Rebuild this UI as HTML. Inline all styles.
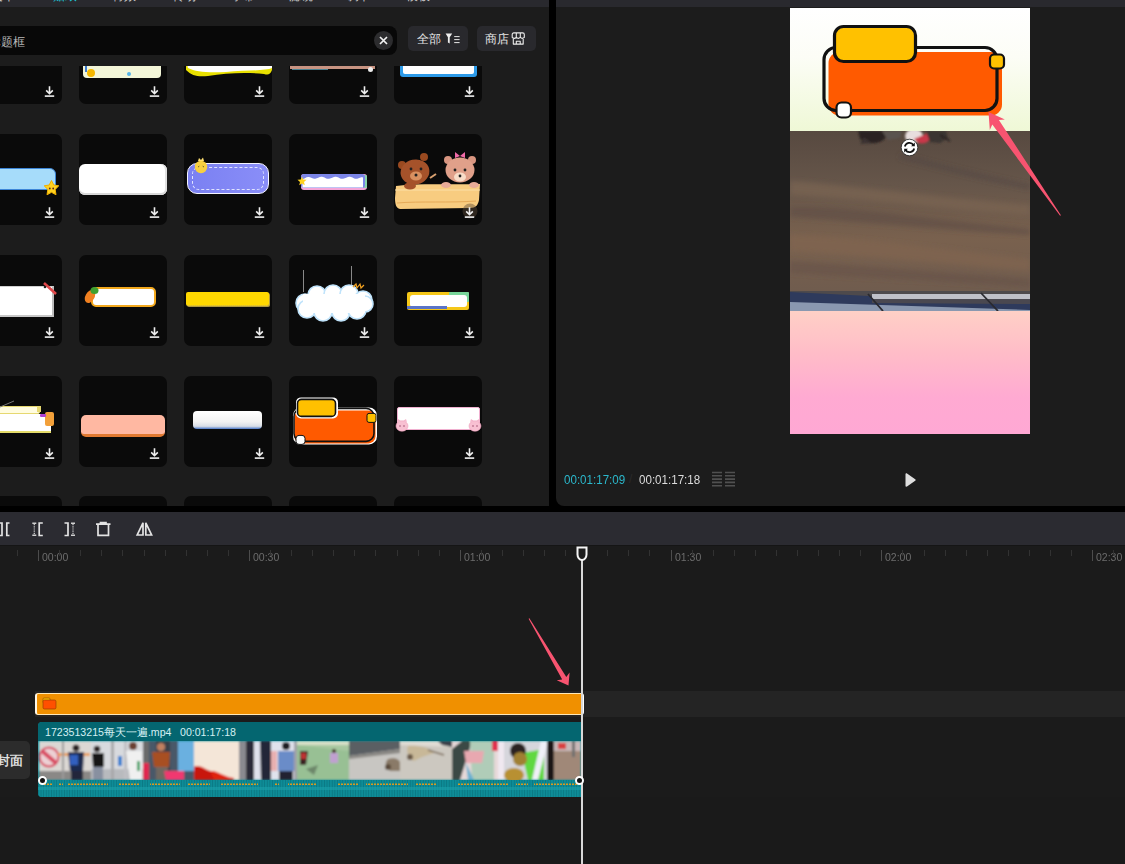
<!DOCTYPE html><html><head><meta charset="utf-8"><style>
*{margin:0;padding:0;box-sizing:border-box}
html,body{width:1125px;height:864px;overflow:hidden;background:#1b1b1b;font-family:"Liberation Sans",sans-serif}
.a{position:absolute}
.tab{top:-12.5px;font-size:12px;color:#d8d8d8;white-space:nowrap}
.card{position:absolute;width:88px;height:91px;background:#0a0a0a;border-radius:7px}
.rt{position:absolute;font-size:10.9px;color:#6c6c6c;top:550.5px;white-space:nowrap;transform:scaleX(0.965);transform-origin:0 0}
.tk{position:absolute;width:1px;background:#505050}
</style></head><body>
<div class="a" style="left:0;top:0;width:549px;height:506px;background:#1c1c1c"></div>
<div class="a" style="left:0;top:0;width:549px;height:7px;background:#29292e"></div>
<div class="a" style="left:0;top:0;width:549px;height:7px;overflow:hidden">
<div class="a tab" style="left:-9px;color:#d0d0d0">文本</div>
<div class="a tab" style="left:53px;color:#1fc0d2">贴纸</div>
<div class="a tab" style="left:112px;color:#d0d0d0">特效</div>
<div class="a tab" style="left:172px;color:#d0d0d0">转场</div>
<div class="a tab" style="left:231px;color:#d0d0d0">字幕</div>
<div class="a tab" style="left:289px;color:#d0d0d0">滤镜</div>
<div class="a tab" style="left:347px;color:#d0d0d0">调节</div>
<div class="a tab" style="left:406px;color:#d0d0d0">模板</div>
</div>
<div class="a" style="left:-20px;top:26px;width:417px;height:29px;background:#080808;border-radius:8px"></div>
<div class="a" style="left:-11px;top:34px;font-size:12px;color:#b8b8b8;white-space:nowrap">标题框</div>
<div class="a" style="left:374px;top:31px;width:19px;height:19px;border-radius:50%;background:#2c2c2e"></div>
<svg class="a" style="left:378px;top:35px" width="11" height="11" viewBox="0 0 11 11"><path d="M2 2L9 9M9 2L2 9" stroke="#f2f2f2" stroke-width="1.7"/></svg>
<div class="a" style="left:408px;top:26px;width:60px;height:25px;background:#29292d;border-radius:5px"></div>
<div class="a" style="left:417px;top:31px;font-size:12px;color:#e6e6e6;white-space:nowrap">全部</div>
<svg class="a" style="left:445px;top:33px" width="16" height="11" viewBox="0 0 16 11"><path d="M0.6 0.5H7.2L4.7 4.2V10.6L2.9 9.4V4.2Z" fill="#eee"/><path d="M9.2 3.6H14.6M9.2 6.6H14.6M9.2 9.6H14.6" stroke="#e8e8e8" stroke-width="1"/></svg>
<div class="a" style="left:477px;top:26px;width:59px;height:25px;background:#29292d;border-radius:5px"></div>
<div class="a" style="left:485px;top:31px;font-size:12px;color:#e6e6e6;white-space:nowrap">商店</div>
<svg class="a" style="left:511px;top:32px" width="15" height="13" viewBox="0 0 15 13"><g stroke="#ececec" stroke-width="1.1" fill="none" stroke-linejoin="round"><path d="M1.2 5.4V2.6Q1.2 0.9 2.9 0.9H11.6Q13.3 0.9 13.3 2.6V5.4Q11.3 7.4 9.3 5.4Q7.3 7.4 5.3 5.4Q3.2 7.4 1.2 5.4Z"/><path d="M5.3 0.9V5.4M9.3 0.9V5.4"/><path d="M2.3 6.9V12.1H12.2V6.9M5.3 12.1V9.3H9.2V12.1"/></g></svg>
<div class="a" style="left:0;top:66px;width:549px;height:440px;overflow:hidden">
<div class="card" style="left:-26px;top:-52.8px">
<svg class="a" style="left:69.5px;top:72.6px" width="11" height="11" viewBox="0 0 11 11"><path d="M5.5 0.3V7.6M2.2 4.4L5.5 7.7L8.8 4.4" stroke="#f0f0f0" stroke-width="1.6" fill="none"/><path d="M0.8 10.1H10.2" stroke="#f0f0f0" stroke-width="1.6"/></svg>
</div>
<div class="card" style="left:79px;top:-52.8px">
<div class="a" style="left:4px;top:41.8px;width:78px;height:23px;background:#f3f6d8;border-radius:0 0 4px 4px"></div>
<div class="a" style="left:6px;top:46.8px;width:2px;height:12px;background:#3f7bd0"></div>
<div class="a" style="left:8px;top:55.8px;width:8px;height:8px;background:#f5b800;border-radius:50%"></div>
<div class="a" style="left:48px;top:58.8px;width:4px;height:4px;background:#56b4e8;border-radius:50%"></div>
<svg class="a" style="left:69.5px;top:72.6px" width="11" height="11" viewBox="0 0 11 11"><path d="M5.5 0.3V7.6M2.2 4.4L5.5 7.7L8.8 4.4" stroke="#f0f0f0" stroke-width="1.6" fill="none"/><path d="M0.8 10.1H10.2" stroke="#f0f0f0" stroke-width="1.6"/></svg>
</div>
<div class="card" style="left:184px;top:-52.8px">
<svg class="a" style="left:2px;top:46.8px" width="86" height="18" viewBox="0 0 86 18"><path d="M0 0H86V10C84 15 82 15 78 14C60 12 40 13 22 16C12 17 6 16 0 10Z" fill="#e8e000"/><path d="M0 0H86V8C80 11 60 10 40 12C22 13 10 12 2 8Z" fill="#fff"/></svg>
<svg class="a" style="left:69.5px;top:72.6px" width="11" height="11" viewBox="0 0 11 11"><path d="M5.5 0.3V7.6M2.2 4.4L5.5 7.7L8.8 4.4" stroke="#f0f0f0" stroke-width="1.6" fill="none"/><path d="M0.8 10.1H10.2" stroke="#f0f0f0" stroke-width="1.6"/></svg>
</div>
<div class="card" style="left:289px;top:-52.8px">
<div class="a" style="left:1px;top:52.8px;width:85px;height:3px;background:#c89482"></div>
<div class="a" style="left:3px;top:55.8px;width:36px;height:1px;background:#4a8090"></div>
<div class="a" style="left:79px;top:53.8px;width:5px;height:5px;background:#eee;border-radius:50%"></div>
<svg class="a" style="left:69.5px;top:72.6px" width="11" height="11" viewBox="0 0 11 11"><path d="M5.5 0.3V7.6M2.2 4.4L5.5 7.7L8.8 4.4" stroke="#f0f0f0" stroke-width="1.6" fill="none"/><path d="M0.8 10.1H10.2" stroke="#f0f0f0" stroke-width="1.6"/></svg>
</div>
<div class="card" style="left:394px;top:-52.8px">
<div class="a" style="left:6px;top:41.8px;width:77px;height:22px;background:#2c9ae8;border-radius:0 0 3px 3px"></div>
<div class="a" style="left:9px;top:41.8px;width:71px;height:19px;background:#fff;border-radius:0 0 2px 2px"></div>
<svg class="a" style="left:69.5px;top:72.6px" width="11" height="11" viewBox="0 0 11 11"><path d="M5.5 0.3V7.6M2.2 4.4L5.5 7.7L8.8 4.4" stroke="#f0f0f0" stroke-width="1.6" fill="none"/><path d="M0.8 10.1H10.2" stroke="#f0f0f0" stroke-width="1.6"/></svg>
</div>
<div class="card" style="left:-26px;top:68px">
<div class="a" style="left:6px;top:34px;width:76px;height:22px;background:#a6dcfa;border:1.5px solid #3d86d8;border-radius:6px"></div>
<svg class="a" style="left:69px;top:46px" width="17" height="16" viewBox="0 0 17 16"><path d="M8.5 0.5L10.8 5L15.8 5.8L12.2 9.4L13 14.8L8.5 12.3L4 14.8L4.8 9.4L1.2 5.8L6.2 5Z" fill="#ffd21f" stroke="#f0b000" stroke-width="1" stroke-linejoin="round"/><circle cx="6.8" cy="8.5" r="0.9" fill="#522"/><circle cx="10.2" cy="8.5" r="0.9" fill="#522"/></svg>
<svg class="a" style="left:69.5px;top:72.6px" width="11" height="11" viewBox="0 0 11 11"><path d="M5.5 0.3V7.6M2.2 4.4L5.5 7.7L8.8 4.4" stroke="#f0f0f0" stroke-width="1.6" fill="none"/><path d="M0.8 10.1H10.2" stroke="#f0f0f0" stroke-width="1.6"/></svg>
</div>
<div class="card" style="left:79px;top:68px">
<div class="a" style="left:0px;top:30px;width:88px;height:31px;background:#fff;border-radius:6px;box-shadow:inset 0 -2px 0 #d8d8d8,inset -2px 0 0 #e0e0e0"></div>
<svg class="a" style="left:69.5px;top:72.6px" width="11" height="11" viewBox="0 0 11 11"><path d="M5.5 0.3V7.6M2.2 4.4L5.5 7.7L8.8 4.4" stroke="#f0f0f0" stroke-width="1.6" fill="none"/><path d="M0.8 10.1H10.2" stroke="#f0f0f0" stroke-width="1.6"/></svg>
</div>
<div class="card" style="left:184px;top:68px">
<div class="a" style="left:3px;top:29px;width:82px;height:31px;background:linear-gradient(90deg,#7a80f2,#8a8ef8);border:1.5px solid #f4f4ff;border-radius:10px"></div>
<div class="a" style="left:8px;top:33px;width:72px;height:23px;border:1px dashed #e0e4ff;border-radius:7px"></div>
<svg class="a" style="left:9px;top:23px" width="16" height="17" viewBox="0 0 16 17"><path d="M5 4L6 1L8 3L10 0.5L11 4" fill="#ffe070"/><circle cx="8" cy="10" r="6.2" fill="#f8d040"/><path d="M5 10L6.3 9.2M11 10L9.7 9.2" stroke="#553" stroke-width="0.9"/></svg>
<svg class="a" style="left:69.5px;top:72.6px" width="11" height="11" viewBox="0 0 11 11"><path d="M5.5 0.3V7.6M2.2 4.4L5.5 7.7L8.8 4.4" stroke="#f0f0f0" stroke-width="1.6" fill="none"/><path d="M0.8 10.1H10.2" stroke="#f0f0f0" stroke-width="1.6"/></svg>
</div>
<div class="card" style="left:289px;top:68px">
<svg class="a" style="left:11px;top:39px" width="68" height="18" viewBox="0 0 68 18">
<rect x="1" y="1" width="66" height="16" rx="3" fill="#f4a6d8"/>
<rect x="63" y="2" width="4" height="13" rx="1.5" fill="#88d4a8"/>
<rect x="1" y="1" width="64" height="14" rx="3" fill="#7c86e8"/>
<path d="M2.5 14.5V6C5 6 6 3.5 9 4C12 4.5 13 6.5 16 5.5C19 4.5 20 3 23 4C26 5 27 6.5 30 5.5C33 4.5 34 3 37 4C40 5 41 6.5 44 5.5C47 4.5 48 3 51 4C54 5 55 6.5 58 5.5C60 5 61 4 63 4.5V14.5Z" fill="#fff"/>
</svg>
<svg class="a" style="left:8px;top:42px" width="10" height="10" viewBox="0 0 10 10"><path d="M5 0.5L6.2 3.6L9.5 3.8L7 6L7.8 9.3L5 7.5L2.2 9.3L3 6L0.5 3.8L3.8 3.6Z" fill="#ffd21f"/></svg>
<svg class="a" style="left:69.5px;top:72.6px" width="11" height="11" viewBox="0 0 11 11"><path d="M5.5 0.3V7.6M2.2 4.4L5.5 7.7L8.8 4.4" stroke="#f0f0f0" stroke-width="1.6" fill="none"/><path d="M0.8 10.1H10.2" stroke="#f0f0f0" stroke-width="1.6"/></svg>
</div>
<div class="card" style="left:394px;top:68px">
<svg class="a" style="left:0;top:0" width="88" height="91" viewBox="0 0 88 91">
<g transform="translate(-394,-134)">
<path d="M396 186C420 183 450 185 480 184L479 200C478 205 476 208 470 208L400 209C396 208 395 204 395 198Z" fill="#f8cc80"/>
<path d="M395 190H480" stroke="#fbe0a8" stroke-width="1"/>
<path d="M397 203C420 201 450 203 476 201" stroke="#e6aa58" stroke-width="1" fill="none"/>
<circle cx="402" cy="165" r="4" fill="#9a4a20"/><circle cx="424" cy="157" r="4" fill="#9a4a20"/>
<ellipse cx="415" cy="172" rx="14.5" ry="12.5" fill="#a5522a" transform="rotate(-12 415 172)"/>
<ellipse cx="416" cy="176" rx="6" ry="4.5" fill="#d89060"/>
<circle cx="411" cy="169" r="1.4" fill="#222"/><circle cx="421" cy="169" r="1.4" fill="#222"/>
<circle cx="416" cy="175" r="1.5" fill="#222"/>
<path d="M430 178L436 174" stroke="#d8a070" stroke-width="2"/>
<ellipse cx="410" cy="186" rx="6" ry="3.5" fill="#a5522a"/>
<circle cx="448" cy="160" r="4" fill="#d89580"/><circle cx="472" cy="160" r="4" fill="#d89580"/>
<ellipse cx="460" cy="170" rx="14.5" ry="12.5" fill="#e0a08a"/>
<ellipse cx="460" cy="177" rx="6" ry="4.5" fill="#f8dcc8"/>
<circle cx="455" cy="170" r="1.4" fill="#222"/><circle cx="465" cy="170" r="1.4" fill="#222"/>
<circle cx="460" cy="176" r="1.4" fill="#222"/>
<path d="M455 152L460 156L465 152L465 158L460 156L455 158Z" fill="#f06aa8"/>
<ellipse cx="446" cy="185" rx="5" ry="3" fill="#e8ab98"/><ellipse cx="474" cy="185" rx="5" ry="3" fill="#e8ab98"/>
<circle cx="470" cy="211" r="7.5" fill="#5a4a38" opacity="0.45"/>
</g></svg>
<svg class="a" style="left:69.5px;top:72.6px" width="11" height="11" viewBox="0 0 11 11"><path d="M5.5 0.3V7.6M2.2 4.4L5.5 7.7L8.8 4.4" stroke="#f0f0f0" stroke-width="1.6" fill="none"/><path d="M0.8 10.1H10.2" stroke="#f0f0f0" stroke-width="1.6"/></svg>
</div>
<div class="card" style="left:-26px;top:188.8px">
<div class="a" style="left:6px;top:31.19999999999999px;width:74px;height:31px;background:#fff;border:1.5px solid #d0d0d0;border-right:2px solid #bdbdbd;border-bottom:2px solid #c8c8c8"></div>
<svg class="a" style="left:66px;top:27.19999999999999px" width="18" height="16" viewBox="0 0 18 16"><path d="M4 1L16 12" stroke="#e0484a" stroke-width="2.6"/><circle cx="5" cy="5" r="1.3" fill="#222"/></svg>
<svg class="a" style="left:69.5px;top:72.6px" width="11" height="11" viewBox="0 0 11 11"><path d="M5.5 0.3V7.6M2.2 4.4L5.5 7.7L8.8 4.4" stroke="#f0f0f0" stroke-width="1.6" fill="none"/><path d="M0.8 10.1H10.2" stroke="#f0f0f0" stroke-width="1.6"/></svg>
</div>
<div class="card" style="left:79px;top:188.8px">
<div class="a" style="left:12px;top:32.19999999999999px;width:65px;height:20px;background:#fff;border:2px solid #f2a81d;border-radius:5px"></div>
<svg class="a" style="left:4px;top:30.19999999999999px" width="16" height="19" viewBox="0 0 16 19"><ellipse cx="7" cy="11.5" rx="4.5" ry="7" transform="rotate(30 7 11.5)" fill="#f08020"/><ellipse cx="11.5" cy="5.5" rx="4" ry="3.6" fill="#40a030"/></svg>
<svg class="a" style="left:69.5px;top:72.6px" width="11" height="11" viewBox="0 0 11 11"><path d="M5.5 0.3V7.6M2.2 4.4L5.5 7.7L8.8 4.4" stroke="#f0f0f0" stroke-width="1.6" fill="none"/><path d="M0.8 10.1H10.2" stroke="#f0f0f0" stroke-width="1.6"/></svg>
</div>
<div class="card" style="left:184px;top:188.8px">
<div class="a" style="left:2px;top:37.19999999999999px;width:83px;height:14px;background:#ffd800;border-radius:2px;border-bottom:1.5px dotted #c8b050;box-shadow:1px 1px 0 #b09a40"></div>
<svg class="a" style="left:69.5px;top:72.6px" width="11" height="11" viewBox="0 0 11 11"><path d="M5.5 0.3V7.6M2.2 4.4L5.5 7.7L8.8 4.4" stroke="#f0f0f0" stroke-width="1.6" fill="none"/><path d="M0.8 10.1H10.2" stroke="#f0f0f0" stroke-width="1.6"/></svg>
</div>
<div class="card" style="left:289px;top:188.8px">
<div class="a" style="left:14px;top:15.199999999999989px;width:1px;height:22px;background:#888"></div>
<div class="a" style="left:62px;top:11.199999999999989px;width:1px;height:24px;background:#888"></div>
<svg class="a" style="left:4px;top:26.19999999999999px" width="82" height="42" viewBox="0 0 82 42">
<g fill="#fff" stroke="#bfe3fb" stroke-width="1.6">
<circle cx="12" cy="22" r="9"/><circle cx="24" cy="14" r="9"/><circle cx="40" cy="13" r="9"/><circle cx="56" cy="13" r="9"/><circle cx="70" cy="19" r="9"/>
<circle cx="14" cy="28" r="9"/><circle cx="30" cy="31" r="9"/><circle cx="48" cy="31" r="9"/><circle cx="64" cy="29" r="9"/><circle cx="72" cy="23" r="8"/>
</g>
<rect x="10" y="13" width="62" height="19" fill="#fff"/>
<path d="M60 6L63 3L64 7L67 3L68 7L71 4" stroke="#f0a020" stroke-width="1.2" fill="none"/>
</svg>
<svg class="a" style="left:69.5px;top:72.6px" width="11" height="11" viewBox="0 0 11 11"><path d="M5.5 0.3V7.6M2.2 4.4L5.5 7.7L8.8 4.4" stroke="#f0f0f0" stroke-width="1.6" fill="none"/><path d="M0.8 10.1H10.2" stroke="#f0f0f0" stroke-width="1.6"/></svg>
</div>
<div class="card" style="left:394px;top:188.8px">
<div class="a" style="left:13px;top:37.19999999999999px;width:62px;height:18px;background:#f5c718;border-radius:2px"></div>
<div class="a" style="left:55px;top:37.19999999999999px;width:20px;height:10px;background:#78d69a;border-radius:1px"></div>
<div class="a" style="left:16px;top:40.19999999999999px;width:57px;height:12px;background:#fff;border-radius:3px"></div>
<div class="a" style="left:13px;top:51.19999999999999px;width:40px;height:3px;background:#5a74c8"></div>
<svg class="a" style="left:69.5px;top:72.6px" width="11" height="11" viewBox="0 0 11 11"><path d="M5.5 0.3V7.6M2.2 4.4L5.5 7.7L8.8 4.4" stroke="#f0f0f0" stroke-width="1.6" fill="none"/><path d="M0.8 10.1H10.2" stroke="#f0f0f0" stroke-width="1.6"/></svg>
</div>
<div class="card" style="left:-26px;top:309.6px">
<div class="a" style="left:6px;top:38.39999999999998px;width:71px;height:19px;background:#fff;border-bottom:2.5px solid #e4dc6a"></div>
<div class="a" style="left:6px;top:30.399999999999977px;width:60px;height:8px;background:#fffce0;border:1px solid #e6d870;border-radius:2px"></div>
<div class="a" style="left:71px;top:36.39999999999998px;width:9px;height:14px;background:#f2a03a;border-radius:2px"></div>
<div class="a" style="left:63px;top:30.399999999999977px;width:4px;height:6px;background:#e6d870"></div>
<svg class="a" style="left:26px;top:23.399999999999977px" width="16" height="10" viewBox="0 0 16 10"><path d="M0 8L14 2" stroke="#777" stroke-width="1"/></svg>
<div class="a" style="left:66px;top:38.39999999999998px;width:6px;height:3px;background:#b040d0;border-radius:1px"></div>
<svg class="a" style="left:69.5px;top:72.6px" width="11" height="11" viewBox="0 0 11 11"><path d="M5.5 0.3V7.6M2.2 4.4L5.5 7.7L8.8 4.4" stroke="#f0f0f0" stroke-width="1.6" fill="none"/><path d="M0.8 10.1H10.2" stroke="#f0f0f0" stroke-width="1.6"/></svg>
</div>
<div class="card" style="left:79px;top:309.6px">
<div class="a" style="left:2px;top:39.39999999999998px;width:84px;height:22px;background:#ffb8a2;border-radius:5px;border-bottom:3px solid #e07a32"></div>
<svg class="a" style="left:69.5px;top:72.6px" width="11" height="11" viewBox="0 0 11 11"><path d="M5.5 0.3V7.6M2.2 4.4L5.5 7.7L8.8 4.4" stroke="#f0f0f0" stroke-width="1.6" fill="none"/><path d="M0.8 10.1H10.2" stroke="#f0f0f0" stroke-width="1.6"/></svg>
</div>
<div class="card" style="left:184px;top:309.6px">
<div class="a" style="left:9px;top:35.39999999999998px;width:69px;height:18px;background:linear-gradient(180deg,#ffffff 0%,#f2f2f2 60%,#d8dde6 85%,#4a78c8 100%);border-radius:4px"></div>
<svg class="a" style="left:69.5px;top:72.6px" width="11" height="11" viewBox="0 0 11 11"><path d="M5.5 0.3V7.6M2.2 4.4L5.5 7.7L8.8 4.4" stroke="#f0f0f0" stroke-width="1.6" fill="none"/><path d="M0.8 10.1H10.2" stroke="#f0f0f0" stroke-width="1.6"/></svg>
</div>
<div class="card" style="left:289px;top:309.6px">
<svg class="a" style="left:0;top:0" width="88" height="91" viewBox="0 0 88 91">
<g transform="translate(-289,-375.6)">
<rect x="293" y="407" width="84" height="37" rx="8" fill="#fff"/>
<rect x="294.5" y="410" width="81" height="33" rx="7" fill="#ff5a00"/>
<rect x="294" y="408" width="80" height="33" rx="8" fill="none" stroke="#111" stroke-width="1.6"/>
<rect x="296" y="397" width="42" height="21" rx="5" fill="#fff"/>
<rect x="297.5" y="399" width="38" height="17" rx="4" fill="#ffc000" stroke="#111" stroke-width="1.6"/>
<rect x="367" y="413" width="9" height="9" rx="2" fill="#ffc000" stroke="#111" stroke-width="1"/>
<rect x="296" y="435" width="9" height="9" rx="3" fill="#fff" stroke="#111" stroke-width="1"/>
</g></svg>
</div>
<div class="card" style="left:394px;top:309.6px">
<div class="a" style="left:3px;top:31.399999999999977px;width:83px;height:23px;background:#fff;border:1.5px solid #f0b0d0;border-radius:2px"></div>
<svg class="a" style="left:1px;top:42.39999999999998px" width="14" height="14" viewBox="0 0 14 14"><path d="M2 4L3 1L6 3M8 3L11 1L12 4" fill="#f5b8cc"/><ellipse cx="7" cy="8" rx="6" ry="5.2" fill="#f8c0d2" stroke="#eea0bc" stroke-width="0.6"/><circle cx="5" cy="8" r="0.8" fill="#a05070"/><circle cx="9" cy="8" r="0.8" fill="#a05070"/></svg>
<svg class="a" style="left:74px;top:42.39999999999998px" width="14" height="14" viewBox="0 0 14 14"><path d="M2 4L3 1L6 3M8 3L11 1L12 4" fill="#f5b8cc"/><ellipse cx="7" cy="8" rx="6" ry="5.2" fill="#f8c0d2" stroke="#eea0bc" stroke-width="0.6"/><circle cx="5" cy="8" r="0.8" fill="#a05070"/><circle cx="9" cy="8" r="0.8" fill="#a05070"/></svg>
<svg class="a" style="left:69.5px;top:72.6px" width="11" height="11" viewBox="0 0 11 11"><path d="M5.5 0.3V7.6M2.2 4.4L5.5 7.7L8.8 4.4" stroke="#f0f0f0" stroke-width="1.6" fill="none"/><path d="M0.8 10.1H10.2" stroke="#f0f0f0" stroke-width="1.6"/></svg>
</div>
<div class="card" style="left:-26px;top:430.4px">
<svg class="a" style="left:69.5px;top:72.6px" width="11" height="11" viewBox="0 0 11 11"><path d="M5.5 0.3V7.6M2.2 4.4L5.5 7.7L8.8 4.4" stroke="#f0f0f0" stroke-width="1.6" fill="none"/><path d="M0.8 10.1H10.2" stroke="#f0f0f0" stroke-width="1.6"/></svg>
</div>
<div class="card" style="left:79px;top:430.4px">
<svg class="a" style="left:69.5px;top:72.6px" width="11" height="11" viewBox="0 0 11 11"><path d="M5.5 0.3V7.6M2.2 4.4L5.5 7.7L8.8 4.4" stroke="#f0f0f0" stroke-width="1.6" fill="none"/><path d="M0.8 10.1H10.2" stroke="#f0f0f0" stroke-width="1.6"/></svg>
</div>
<div class="card" style="left:184px;top:430.4px">
<svg class="a" style="left:69.5px;top:72.6px" width="11" height="11" viewBox="0 0 11 11"><path d="M5.5 0.3V7.6M2.2 4.4L5.5 7.7L8.8 4.4" stroke="#f0f0f0" stroke-width="1.6" fill="none"/><path d="M0.8 10.1H10.2" stroke="#f0f0f0" stroke-width="1.6"/></svg>
</div>
<div class="card" style="left:289px;top:430.4px">
<svg class="a" style="left:69.5px;top:72.6px" width="11" height="11" viewBox="0 0 11 11"><path d="M5.5 0.3V7.6M2.2 4.4L5.5 7.7L8.8 4.4" stroke="#f0f0f0" stroke-width="1.6" fill="none"/><path d="M0.8 10.1H10.2" stroke="#f0f0f0" stroke-width="1.6"/></svg>
</div>
<div class="card" style="left:394px;top:430.4px">
<svg class="a" style="left:69.5px;top:72.6px" width="11" height="11" viewBox="0 0 11 11"><path d="M5.5 0.3V7.6M2.2 4.4L5.5 7.7L8.8 4.4" stroke="#f0f0f0" stroke-width="1.6" fill="none"/><path d="M0.8 10.1H10.2" stroke="#f0f0f0" stroke-width="1.6"/></svg>
</div>
</div>
<div class="a" style="left:549px;top:0;width:7px;height:512px;background:#000"></div>
<div class="a" style="left:549px;top:480px;width:30px;height:32px;background:#000"></div>
<div class="a" style="left:556px;top:0;width:569px;height:506px;background:#1c1c1c;border-bottom-left-radius:8px"></div>
<div class="a" style="left:556px;top:0;width:569px;height:7px;background:#29292e"></div>
<div class="a" style="left:0;top:506px;width:1125px;height:6px;background:#000"></div>

<div class="a" style="left:790px;top:8px;width:240px;height:123px;background:linear-gradient(180deg,#ffffff 0%,#fcfdf6 40%,#eff8d6 100%)"></div>
<div class="a" style="left:790px;top:131px;width:240px;height:180px;background:linear-gradient(175deg,#5e5048 0%,#6e5a4c 25%,#7a6050 50%,#6e5a4c 75%,#5a5250 100%)"></div>
<div class="a" style="left:790px;top:311px;width:240px;height:123px;background:linear-gradient(180deg,#ffd0c6 0%,#ffbcc8 35%,#ffaad2 70%,#ffa8d4 100%)"></div>

<svg class="a" style="left:790px;top:131px" width="240" height="180" viewBox="0 0 240 180">
<defs><filter id="vb" x="-10%" y="-10%" width="120%" height="120%"><feGaussianBlur stdDeviation="2.5"/></filter>
<filter id="vb2" x="-10%" y="-10%" width="120%" height="120%"><feGaussianBlur stdDeviation="0.8"/></filter>
<linearGradient id="vg" x1="0" y1="0" x2="0" y2="1"><stop offset="0" stop-color="#574940"/><stop offset="0.3" stop-color="#66564a"/><stop offset="0.6" stop-color="#79614e"/><stop offset="1" stop-color="#6c5a4e"/></linearGradient></defs>
<rect x="0" y="0" width="240" height="180" fill="url(#vg)"/>
<g filter="url(#vb)">
<path d="M0 50C60 54 140 66 240 74V84C150 78 80 68 0 64Z" fill="#7a6452" opacity="0.7"/>
<path d="M0 76C50 74 120 86 240 98V104C140 98 60 90 0 86Z" fill="#5e4c42" opacity="0.6"/>
<path d="M0 104C60 106 140 116 240 128V140C150 132 60 124 0 120Z" fill="#806450" opacity="0.7"/>
<path d="M0 130C60 134 140 140 240 148V156C150 150 60 146 0 142Z" fill="#625046" opacity="0.5"/>
<path d="M110 25C150 36 200 48 240 56" stroke="#4e4440" stroke-width="5" fill="none" opacity="0.5"/>
</g>
<g filter="url(#vb2)">
<path d="M68 0H92L96 6C92 12 84 13 76 12L70 8Z" fill="#2a2422"/>
<path d="M74 6L82 12L70 13Z" fill="#3a3230"/>
<path d="M92 0H112L110 7L98 9Z" fill="#5a5250"/>
<ellipse cx="124" cy="5" rx="9" ry="7" fill="#e8dede"/>
<path d="M124 8C128 14 136 14 140 8L138 2Z" fill="#c83848"/>
<path d="M136 0H156L158 7L150 12L140 11Z" fill="#3a3430"/>
<path d="M150 4L160 10" stroke="#2a2422" stroke-width="2"/>
</g>
<path d="M0 160L240 160V180H0Z" fill="#4e4a4c"/>
<path d="M0 170L240 176V180H0Z" fill="#8a98b0"/>
<path d="M0 161L240 173V179L0 171Z" fill="#2e3a5c"/>
<path d="M82 163L240 163V168L82 168Z" fill="#bfc0c8"/>
<path d="M82 168L240 168V173L82 172Z" fill="#4a4850"/>
<path d="M78 163L93 180M191 162L208 180" stroke="#2a2a30" stroke-width="1.8"/>
</svg>
<svg class="a" style="left:790px;top:8px" width="240" height="123" viewBox="0 0 240 123">
<g transform="translate(-790,-8)">
<rect x="828.5" y="52" width="173.5" height="63.5" rx="11" fill="#ff5a00"/>
<rect x="824" y="47.5" width="173" height="63" rx="12" fill="none" stroke="#111" stroke-width="3.2"/>
<rect x="834.5" y="26.5" width="81" height="35" rx="9" fill="#ffc100" stroke="#111" stroke-width="3.2"/>
<rect x="990" y="54.5" width="14" height="14" rx="4" fill="#ffc100" stroke="#111" stroke-width="2.2"/>
<rect x="836.5" y="102.5" width="14.5" height="15" rx="5" fill="#fff" stroke="#111" stroke-width="2.2"/>
</g></svg>
<svg class="a" style="left:900px;top:138px" width="19" height="19" viewBox="0 0 19 19">
<circle cx="9.5" cy="9.5" r="8.3" fill="#fff" stroke="#222" stroke-width="0.8"/>
<path d="M4.8 8.5A4.8 4.8 0 0 1 13.5 7M14.2 10.5A4.8 4.8 0 0 1 5.5 12" stroke="#111" stroke-width="1.7" fill="none"/>
<path d="M14.8 4.5V8.2H11.1Z M4.2 14.5V10.8H7.9Z" fill="#111"/>
</svg>
<svg class="a" style="left:0;top:0" width="1125" height="864" viewBox="0 0 1125 864"><path d="M988.5 112.0 L989.8 130.0 L992.3 124.5 L1060.1 215.8 L1060.9 215.2 L998.9 119.9 L1004.9 119.5Z" fill="#f85470"/><path d="M568.5 685.5 L569.6 672.6 L566.3 677.0 L529.4 618.2 L528.6 618.8 L562.2 679.5 L556.7 680.3Z" fill="#f85470"/></svg>
<div class="a" style="left:564px;top:472px;font-size:12.8px;color:#2bb8cc;white-space:nowrap;transform:scaleX(0.905);transform-origin:0 0">00:01:17:09</div>
<div class="a" style="left:629px;top:472px;font-size:12px;color:#2a2a2a">/</div>
<div class="a" style="left:638.6px;top:472px;font-size:12.8px;color:#dcdcdc;white-space:nowrap;transform:scaleX(0.905);transform-origin:0 0">00:01:17:18</div>
<svg class="a" style="left:712px;top:471px" width="24" height="17" viewBox="0 0 24 17">
<g stroke="#505050" stroke-width="1.6">
<path d="M0 1.5H10M0 4.8H10M0 8.1H10M0 11.4H10M0 14.7H10"/>
<path d="M13 1.5H23M13 4.8H23M13 8.1H23M13 11.4H23M13 14.7H23"/>
</g></svg>
<svg class="a" style="left:903px;top:472px" width="14" height="16" viewBox="0 0 14 16"><path d="M2.5 2.2C2.5 1.4 3.3 1 4 1.4L12.2 7.2C12.8 7.6 12.8 8.4 12.2 8.8L4 14.6C3.3 15 2.5 14.6 2.5 13.8Z" fill="#dedede"/></svg>
<div class="a" style="left:0;top:512px;width:1125px;height:34px;background:#2b2b31"></div>
<div class="a" style="left:0;top:545px;width:1125px;height:1px;background:#151515"></div>
<svg class="a" style="left:0;top:520px" width="160" height="18" viewBox="0 0 160 18">
<g stroke="#e4e4e4" stroke-width="1.7" fill="none">
<path d="M-1 3H2V15.5H-1 M9.5 3H6.8V15.5H9.5"/>
<path d="M42.8 3H39.2V15.5H42.8"/>
<path d="M64.5 3H68V15.5H64.5"/>
<path d="M96 4.2H110.5 M100.5 4.2V2.6H106V4.2 M98 4.2V15.3H108.5V4.2"/>
<path d="M143 2.8L137.2 15H143Z M145.8 2.8L151.6 15H145.8Z"/>
</g>
<g stroke="#d0d0d0" stroke-width="1.6">
<path d="M32.3 3.3H36.3 M32.3 15.2H36.3 M71 3.3H75 M71 15.2H75"/>
</g>
<g stroke="#c8c8c8" stroke-width="1.3" stroke-dasharray="1.2 1">
<path d="M34.3 4V14.5 M73 4V14.5"/>
</g>
</svg>
<div class="tk" style="left:17.0px;top:550px;height:6px;background:#323232"></div>
<div class="tk" style="left:38.1px;top:550px;height:11px;background:#4c4c4c"></div>
<div class="rt" style="left:42.2px">00:00</div>
<div class="tk" style="left:59.2px;top:550px;height:6px;background:#323232"></div>
<div class="tk" style="left:80.3px;top:550px;height:6px;background:#323232"></div>
<div class="tk" style="left:101.3px;top:550px;height:6px;background:#323232"></div>
<div class="tk" style="left:122.4px;top:550px;height:6px;background:#323232"></div>
<div class="tk" style="left:143.5px;top:550px;height:6px;background:#323232"></div>
<div class="tk" style="left:164.6px;top:550px;height:6px;background:#323232"></div>
<div class="tk" style="left:185.7px;top:550px;height:6px;background:#323232"></div>
<div class="tk" style="left:206.7px;top:550px;height:6px;background:#323232"></div>
<div class="tk" style="left:227.8px;top:550px;height:6px;background:#323232"></div>
<div class="tk" style="left:248.9px;top:550px;height:11px;background:#4c4c4c"></div>
<div class="rt" style="left:253.0px">00:30</div>
<div class="tk" style="left:270.0px;top:550px;height:6px;background:#323232"></div>
<div class="tk" style="left:291.1px;top:550px;height:6px;background:#323232"></div>
<div class="tk" style="left:312.1px;top:550px;height:6px;background:#323232"></div>
<div class="tk" style="left:333.2px;top:550px;height:6px;background:#323232"></div>
<div class="tk" style="left:354.3px;top:550px;height:6px;background:#323232"></div>
<div class="tk" style="left:375.4px;top:550px;height:6px;background:#323232"></div>
<div class="tk" style="left:396.5px;top:550px;height:6px;background:#323232"></div>
<div class="tk" style="left:417.5px;top:550px;height:6px;background:#323232"></div>
<div class="tk" style="left:438.6px;top:550px;height:6px;background:#323232"></div>
<div class="tk" style="left:459.7px;top:550px;height:11px;background:#4c4c4c"></div>
<div class="rt" style="left:463.8px">01:00</div>
<div class="tk" style="left:480.8px;top:550px;height:6px;background:#323232"></div>
<div class="tk" style="left:501.9px;top:550px;height:6px;background:#323232"></div>
<div class="tk" style="left:522.9px;top:550px;height:6px;background:#323232"></div>
<div class="tk" style="left:544.0px;top:550px;height:6px;background:#323232"></div>
<div class="tk" style="left:565.1px;top:550px;height:6px;background:#323232"></div>
<div class="tk" style="left:586.2px;top:550px;height:6px;background:#323232"></div>
<div class="tk" style="left:607.3px;top:550px;height:6px;background:#323232"></div>
<div class="tk" style="left:628.3px;top:550px;height:6px;background:#323232"></div>
<div class="tk" style="left:649.4px;top:550px;height:6px;background:#323232"></div>
<div class="tk" style="left:670.5px;top:550px;height:11px;background:#4c4c4c"></div>
<div class="rt" style="left:674.6px">01:30</div>
<div class="tk" style="left:691.6px;top:550px;height:6px;background:#323232"></div>
<div class="tk" style="left:712.7px;top:550px;height:6px;background:#323232"></div>
<div class="tk" style="left:733.7px;top:550px;height:6px;background:#323232"></div>
<div class="tk" style="left:754.8px;top:550px;height:6px;background:#323232"></div>
<div class="tk" style="left:775.9px;top:550px;height:6px;background:#323232"></div>
<div class="tk" style="left:797.0px;top:550px;height:6px;background:#323232"></div>
<div class="tk" style="left:818.1px;top:550px;height:6px;background:#323232"></div>
<div class="tk" style="left:839.1px;top:550px;height:6px;background:#323232"></div>
<div class="tk" style="left:860.2px;top:550px;height:6px;background:#323232"></div>
<div class="tk" style="left:881.3px;top:550px;height:11px;background:#4c4c4c"></div>
<div class="rt" style="left:885.4px">02:00</div>
<div class="tk" style="left:902.4px;top:550px;height:6px;background:#323232"></div>
<div class="tk" style="left:923.5px;top:550px;height:6px;background:#323232"></div>
<div class="tk" style="left:944.5px;top:550px;height:6px;background:#323232"></div>
<div class="tk" style="left:965.6px;top:550px;height:6px;background:#323232"></div>
<div class="tk" style="left:986.7px;top:550px;height:6px;background:#323232"></div>
<div class="tk" style="left:1007.8px;top:550px;height:6px;background:#323232"></div>
<div class="tk" style="left:1028.9px;top:550px;height:6px;background:#323232"></div>
<div class="tk" style="left:1049.9px;top:550px;height:6px;background:#323232"></div>
<div class="tk" style="left:1071.0px;top:550px;height:6px;background:#323232"></div>
<div class="tk" style="left:1092.1px;top:550px;height:11px;background:#4c4c4c"></div>
<div class="rt" style="left:1096.2px">02:30</div>
<div class="tk" style="left:1113.2px;top:550px;height:6px;background:#323232"></div>
<div class="a" style="left:35px;top:691px;width:1090px;height:26px;background:#242424"></div>
<div class="a" style="left:0;top:797px;width:1125px;height:67px;background:#1a1a1a"></div>
<div class="a" style="left:35px;top:693px;width:549px;height:22px;background:#f09000;border:1.5px solid #ffe8b8;border-left:2.5px solid #fff8e8;border-right:3px solid #ffffff;border-radius:3px"></div>
<svg class="a" style="left:42px;top:696px" width="15" height="14" viewBox="0 0 15 14"><rect x="1" y="2" width="7" height="5" rx="1" fill="#ffc000" stroke="#8a4a00" stroke-width="0.6"/><rect x="1" y="4" width="13" height="9" rx="1.5" fill="#ff5000" stroke="#8a3a00" stroke-width="0.6"/></svg>
<div class="a" style="left:38px;top:722px;width:543px;height:75px;background:#0a8a96;border-radius:4px 0 0 4px;overflow:hidden">
<div class="a" style="left:0;top:0;width:543px;height:19px;background:#046670"></div>
<div class="a" style="left:7px;top:3.5px;font-size:10.6px;color:#d4f0f2;white-space:nowrap">1723513215每天一遍.mp4</div>
<div class="a" style="left:142px;top:3.5px;font-size:10.6px;color:#d4f0f2;white-space:nowrap">00:01:17:18</div>
<svg class="a" style="left:0;top:19px" width="543" height="56" viewBox="0 0 543 56">
<defs>
<filter id="bl" x="-5%" y="-5%" width="110%" height="110%"><feGaussianBlur stdDeviation="1.2"/></filter>
<pattern id="wv" width="2.6" height="20" patternUnits="userSpaceOnUse"><rect width="2.6" height="20" fill="#0e8c97"/><rect width="0.8" height="20" fill="#0a7681"/></pattern>
<pattern id="dt" width="3" height="3" patternUnits="userSpaceOnUse"><rect width="2" height="2" fill="#d89a20"/></pattern>
<clipPath id="cp"><rect x="0" y="0" width="543" height="39"/></clipPath>
</defs>
<rect x="0" y="39" width="543" height="17" fill="url(#wv)"/>
<rect x="0" y="46" width="543" height="3" fill="#1aa0aa" opacity="0.6"/>
<g fill="url(#dt)">
<rect x="5" y="42.5" width="10" height="2"/><rect x="20" y="42.5" width="5" height="2"/><rect x="30" y="42.5" width="40" height="2"/><rect x="80" y="42.5" width="22" height="2"/><rect x="112" y="42.5" width="30" height="2"/><rect x="150" y="42.5" width="22" height="2"/>
<rect x="182" y="42.5" width="38" height="2"/><rect x="236" y="42.5" width="5" height="2"/><rect x="250" y="42.5" width="28" height="2"/><rect x="300" y="42.5" width="20" height="2"/><rect x="328" y="42.5" width="42" height="2"/><rect x="378" y="42.5" width="20" height="2"/>
<rect x="420" y="42.5" width="50" height="2"/><rect x="478" y="42.5" width="12" height="2"/><rect x="496" y="42.5" width="45" height="2"/><rect x="5" y="42.5" width="540" height="0" />
</g>
<g clip-path="url(#cp)" filter="url(#bl)">
<!-- frame1 -->
<rect x="1" y="0" width="52" height="39" fill="#dcd8d4"/>
<rect x="1" y="30" width="52" height="9" fill="#8a8886"/>
<circle cx="11" cy="16" r="9.5" fill="#ecd0d4" stroke="#d84860" stroke-width="2"/>
<path d="M4 10L18 22" stroke="#d84860" stroke-width="4"/>
<rect x="20" y="12" width="32" height="3" fill="#e8a060"/>
<circle cx="38" cy="7" r="3.5" fill="#2a2420"/>
<path d="M30 11H46L45 30H32Z" fill="#1e2a50"/>
<path d="M32 14H40V24H32Z" fill="#3060c0"/>
<rect x="33" y="30" width="12" height="9" fill="#20283a"/>
<rect x="24" y="0" width="2" height="39" fill="#9a9a9a"/>
<!-- frame2 -->
<rect x="53" y="0" width="52" height="39" fill="#d8dade"/>
<rect x="53" y="28" width="52" height="11" fill="#b8babe"/>
<rect x="73" y="0" width="3" height="39" fill="#a8a8aa"/>
<rect x="86" y="0" width="3" height="39" fill="#c0c0c4"/>
<circle cx="59" cy="8" r="3.3" fill="#2a2420"/>
<path d="M54 12H66V26H55Z" fill="#151515"/>
<rect x="55" y="26" width="10" height="13" fill="#8890a0"/>
<rect x="80" y="15" width="4" height="10" fill="#3080d0"/>
<circle cx="95" cy="5" r="4" fill="#6a4030"/>
<path d="M88 10H104V39H92Z" fill="#f0f0f0"/>
<rect x="99" y="20" width="3" height="10" fill="#30a060"/>
<!-- frame3 -->
<rect x="105" y="0" width="51" height="39" fill="#4a5868"/>
<rect x="140" y="0" width="16" height="30" fill="#6ab0e0"/>
<rect x="118" y="0" width="14" height="39" fill="#384048"/>
<rect x="105" y="0" width="6" height="39" fill="#6a6a6a"/>
<rect x="105" y="22" width="6" height="17" fill="#e02850"/>
<circle cx="123" cy="6" r="4" fill="#c08060"/>
<path d="M114 11H132L131 26H116Z" fill="#a85020"/>
<rect x="118" y="26" width="12" height="13" fill="#706860"/>
<path d="M126 30H146V39H128Z" fill="#f03870"/>
<!-- frame4 -->
<rect x="156" y="0" width="52" height="39" fill="#f4e6d8"/>
<path d="M156 26C162 22 168 30 174 30C180 30 186 36 196 37V39H156Z" fill="#e02010"/>
<path d="M156 26C162 24 168 30 172 30L176 39H156Z" fill="#c81810"/>
<rect x="201" y="0" width="7" height="39" fill="#8a8a90"/>
<!-- frame5 -->
<rect x="208" y="0" width="51" height="39" fill="#e0e2ec"/>
<rect x="208" y="0" width="8" height="39" fill="#2a2a38"/>
<path d="M222 0H233V39H223Z" fill="#242838"/>
<rect x="233" y="10" width="6" height="20" fill="#e8b0b0"/>
<circle cx="248" cy="5" r="4" fill="#1e1e24"/>
<path d="M240 10H256V30H240Z" fill="#6a8cc8"/>
<rect x="241" y="30" width="14" height="9" fill="#202430"/>
<rect x="256" y="0" width="3" height="39" fill="#a0a0a8"/>
<!-- frame6 -->
<rect x="259" y="0" width="52" height="39" fill="#a8c8a0"/>
<rect x="259" y="0" width="52" height="4" fill="#d8e0c8"/>
<path d="M259 4L311 10V39H259Z" fill="#98c094"/>
<path d="M262 10H270L268 24H262Z" fill="#3a2020"/>
<path d="M263 12H268V18H263Z" fill="#c03030"/>
<path d="M268 28L280 24L276 34Z" fill="#506050" opacity="0.6"/>
<path d="M292 12H300V22H292Z" fill="#c0a0d0"/>
<circle cx="296" cy="10" r="2" fill="#402020"/>
<!-- frame7 -->
<rect x="311" y="0" width="51" height="39" fill="#c8c6c2"/>
<path d="M311 0H362V8L311 15Z" fill="#5a5e64"/>
<path d="M311 15L362 8V12L311 18Z" fill="#8a8884"/>
<path d="M350 18C356 16 362 18 362 22V30L352 30C348 26 346 22 350 18Z" fill="#8a7a68"/>
<circle cx="350" cy="26" r="3" fill="#5a4a3a"/>
<!-- frame8 -->
<rect x="362" y="0" width="52" height="39" fill="#ccc8c0"/>
<path d="M362 0H414V6L362 4Z" fill="#e0dcd4"/>
<path d="M370 5C378 4 392 6 396 12L384 16L376 20C370 18 368 10 370 5Z" fill="#c8b898"/>
<circle cx="372" cy="16" r="3" fill="#6a5a48"/>
<path d="M390 9L406 14" stroke="#7a6a58" stroke-width="1.5"/>
<path d="M400 0H414V6L404 4Z" fill="#3a4048"/>
<!-- frame9 -->
<rect x="414" y="0" width="52" height="39" fill="#e6d8d8"/>
<path d="M414 8L424 0H434L422 39H414Z" fill="#3a4844"/>
<path d="M432 0H456V39H434Z" fill="#b0ccb8"/>
<path d="M426 10H446L444 22H428Z" fill="#e8a8b0"/>
<rect x="454" y="0" width="8" height="10" fill="#e03050"/>
<rect x="460" y="0" width="6" height="39" fill="#f0e8f0"/>
<path d="M428 22L436 39H430Z" fill="#6ab0d0"/>
<!-- frame10 -->
<rect x="466" y="0" width="50" height="39" fill="#d6d6dc"/>
<path d="M484 12L506 8V39H490Z" fill="#60d840"/>
<path d="M503 0H510L500 39H494Z" fill="#f0f0f8"/>
<rect x="509" y="0" width="7" height="39" fill="#1a1418"/>
<ellipse cx="480" cy="10" rx="8" ry="8" fill="#2a2420"/>
<ellipse cx="482" cy="18" rx="7" ry="7" fill="#a08030"/>
<ellipse cx="476" cy="34" rx="10" ry="7" fill="#b89030"/>
<!-- frame11 -->
<rect x="516" y="0" width="27" height="39" fill="#a08878"/>
<rect x="516" y="0" width="27" height="10" fill="#c8b8b8"/>
<rect x="520" y="2" width="8" height="6" fill="#d84040"/>
<rect x="534" y="0" width="3" height="16" fill="#707070"/>
</g>
</svg>
</div>
<div class="a" style="left:581px;top:556px;width:2px;height:308px;background:#d8d8d8"></div>
<svg class="a" style="left:575px;top:546px" width="14" height="16" viewBox="0 0 14 16"><path d="M2.5 1.5H11.5V8.5C11.5 11.5 9.5 14 7 14C4.5 14 2.5 11.5 2.5 8.5Z" fill="#1c1c1c" stroke="#f4f4f4" stroke-width="2"/></svg>
<div class="a" style="left:37.5px;top:775.5px;width:9px;height:9px;border-radius:50%;background:#111;border:2px solid #fff"></div>
<div class="a" style="left:574.5px;top:775.5px;width:9px;height:9px;border-radius:50%;background:#111;border:2px solid #fff"></div>
<div class="a" style="left:-6px;top:741px;width:36px;height:38px;background:#2c2c2c;border-radius:5px"></div>
<div class="a" style="left:-3px;top:753px;font-size:12.5px;font-weight:bold;color:#dedede;white-space:nowrap">封面</div>
</body></html>
